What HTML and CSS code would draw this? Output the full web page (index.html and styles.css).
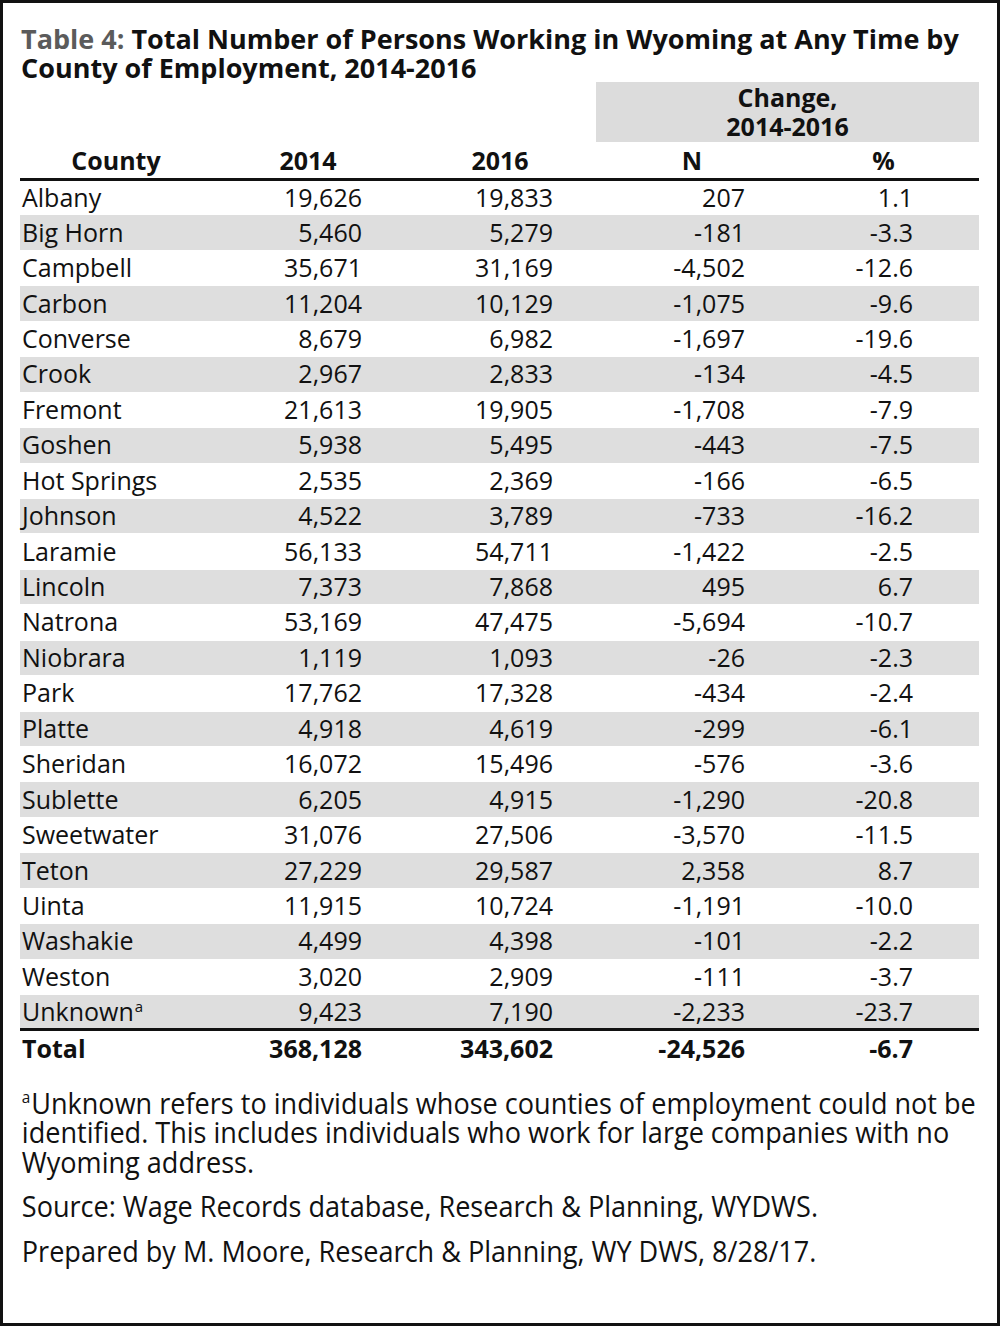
FILE: index.html
```html
<!DOCTYPE html>
<html lang="en">
<head>
<meta charset="utf-8">
<title>Table 4</title>
<link rel="stylesheet" href="styles.css">
</head>
<body>
<div class="frame">
  <h1 class="title"><span class="label">Table 4:</span> Total Number of Persons Working in Wyoming at Any Time by County of Employment, 2014-2016</h1>
  <table class="data">
    <colgroup>
      <col class="c1"><col class="c2"><col class="c3"><col class="c4"><col class="c5">
    </colgroup>
    <thead>
      <tr class="group">
        <th></th><th></th><th></th>
        <th colspan="2" class="change">Change,<br>2014-2016</th>
      </tr>
      <tr class="heads">
        <th>County</th><th>2014</th><th>2016</th><th>N</th><th>%</th>
      </tr>
    </thead>
    <tbody>
      <tr><td>Albany</td><td>19,626</td><td>19,833</td><td>207</td><td>1.1</td></tr>
      <tr><td>Big Horn</td><td>5,460</td><td>5,279</td><td>-181</td><td>-3.3</td></tr>
      <tr><td>Campbell</td><td>35,671</td><td>31,169</td><td>-4,502</td><td>-12.6</td></tr>
      <tr><td>Carbon</td><td>11,204</td><td>10,129</td><td>-1,075</td><td>-9.6</td></tr>
      <tr><td>Converse</td><td>8,679</td><td>6,982</td><td>-1,697</td><td>-19.6</td></tr>
      <tr><td>Crook</td><td>2,967</td><td>2,833</td><td>-134</td><td>-4.5</td></tr>
      <tr><td>Fremont</td><td>21,613</td><td>19,905</td><td>-1,708</td><td>-7.9</td></tr>
      <tr><td>Goshen</td><td>5,938</td><td>5,495</td><td>-443</td><td>-7.5</td></tr>
      <tr><td>Hot Springs</td><td>2,535</td><td>2,369</td><td>-166</td><td>-6.5</td></tr>
      <tr><td>Johnson</td><td>4,522</td><td>3,789</td><td>-733</td><td>-16.2</td></tr>
      <tr><td>Laramie</td><td>56,133</td><td>54,711</td><td>-1,422</td><td>-2.5</td></tr>
      <tr><td>Lincoln</td><td>7,373</td><td>7,868</td><td>495</td><td>6.7</td></tr>
      <tr><td>Natrona</td><td>53,169</td><td>47,475</td><td>-5,694</td><td>-10.7</td></tr>
      <tr><td>Niobrara</td><td>1,119</td><td>1,093</td><td>-26</td><td>-2.3</td></tr>
      <tr><td>Park</td><td>17,762</td><td>17,328</td><td>-434</td><td>-2.4</td></tr>
      <tr><td>Platte</td><td>4,918</td><td>4,619</td><td>-299</td><td>-6.1</td></tr>
      <tr><td>Sheridan</td><td>16,072</td><td>15,496</td><td>-576</td><td>-3.6</td></tr>
      <tr><td>Sublette</td><td>6,205</td><td>4,915</td><td>-1,290</td><td>-20.8</td></tr>
      <tr><td>Sweetwater</td><td>31,076</td><td>27,506</td><td>-3,570</td><td>-11.5</td></tr>
      <tr><td>Teton</td><td>27,229</td><td>29,587</td><td>2,358</td><td>8.7</td></tr>
      <tr><td>Uinta</td><td>11,915</td><td>10,724</td><td>-1,191</td><td>-10.0</td></tr>
      <tr><td>Washakie</td><td>4,499</td><td>4,398</td><td>-101</td><td>-2.2</td></tr>
      <tr><td>Weston</td><td>3,020</td><td>2,909</td><td>-111</td><td>-3.7</td></tr>
      <tr><td>Unknown<sup>a</sup></td><td>9,423</td><td>7,190</td><td>-2,233</td><td>-23.7</td></tr>
    </tbody>
    <tfoot>
      <tr><td>Total</td><td>368,128</td><td>343,602</td><td>-24,526</td><td>-6.7</td></tr>
    </tfoot>
  </table>
  <div class="notes">
    <p class="note"><sup>a</sup>Unknown refers to individuals whose counties of employment could not be identified. This includes individuals who work for large companies with no Wyoming address.</p>
    <p class="note">Source: Wage Records database, Research &amp; Planning, WYDWS.</p>
    <p class="note">Prepared by M. Moore, Research &amp; Planning, WY DWS, 8/28/17.</p>
  </div>
</div>
</body>
</html>
```

FILE: styles.css
```css
* { box-sizing: border-box; }
html, body { margin: 0; padding: 0; background: #fff; }
body {
  font-family: "Open Sans", "Noto Sans", sans-serif;
  color: #111;
}
.frame {
  width: 1000px;
  height: 1326px;
  border: 3px solid #111;
  padding: 21px 18px 0 17px;
  overflow: hidden;
}
.title {
  margin: 0 0 0 1px;
  height: 58px;
  font-size: 27px;
  line-height: 29px;
  font-weight: 700;
  color: #111;
}
.title .label { color: #5b5b5b; }

.data {
  width: 959px;
  border-collapse: collapse;
  table-layout: fixed;
  font-size: 25px;
}
.c1 { width: 192px; }
.c2 { width: 192px; }
.c3 { width: 192px; }
.c4 { width: 192px; }
.c5 { width: 191px; }

.data th, .data td { padding: 0; }

.group th { height: 60px; }
.change {
  background: #dcdcdc;
  font-weight: 700;
  line-height: 29px;
  text-align: center;
  padding-bottom: 2px;
}
.heads th {
  height: 37px;
  border-bottom: 3px solid #111;
  font-weight: 700;
  text-align: center;
  vertical-align: middle;
  padding-top: 1px;
}

tbody tr { height: 35.45px; }
tbody tr:nth-child(even) td { background: #dedede; box-shadow: inset 0 1px 0 #fff; }
tbody tr:last-child td { border-bottom: 3px solid #111; }

.data td {
  text-align: right;
  vertical-align: middle;
  white-space: nowrap;
  line-height: 33px;
}
.data td:first-child { text-align: left; padding-left: 2px; }
.data td:nth-child(2) { padding-right: 42px; }
.data td:nth-child(3) { padding-right: 43px; }
.data td:nth-child(4) { padding-right: 43px; }
.data td:nth-child(5) { padding-right: 66px; }

.data sup {
  font-size: 15px;
  line-height: 0;
  vertical-align: 9px;
  margin-left: 1px;
}

tfoot tr { height: 37px; }
tfoot td { font-weight: 700; }

.notes {
  margin-top: 21px;
  padding-left: 2px;
  width: 1075px;
  transform: scaleX(0.902);
  transform-origin: left top;
}
.note {
  margin: 0 0 15px 0;
  font-family: "Open Sans", "Noto Sans", sans-serif;
  font-size: 30px;
  line-height: 29.5px;
  color: #111;
}
.note sup {
  font-size: 17px;
  line-height: 0;
  vertical-align: 11px;
  margin-right: 1px;
}
```
